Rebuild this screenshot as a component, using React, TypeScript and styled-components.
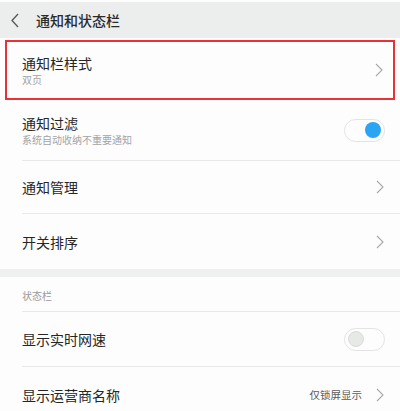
import React from 'react'
import styled, { createGlobalStyle } from 'styled-components'

const GlobalStyle = createGlobalStyle`
  html, body {
    margin: 0;
    padding: 0;
    background: #fdfdfd;
  }
  body {
    font-family: 'Noto Sans CJK SC', 'Noto Sans', sans-serif;
    color: #262626;
  }
`

const Page = styled.div`
  width: 400px;
  height: 411px;
  overflow: hidden;
  padding-top: 2px;
  box-sizing: border-box;
  background: #fdfdfd;
`

const Header = styled.div`
  height: 36px;
  display: flex;
  align-items: center;
  background: #eceeee;
  padding-left: 11px;
  gap: 17px;
`

const Title = styled.div`
  font-size: 14px;
  color: #2a2a2a;
  font-weight: 500;
`

const Highlight = styled.div`
  margin: 2px 5px 0 5px;
  height: 60px;
  box-sizing: border-box;
  border: 2px solid #e8323a;
  display: flex;
  align-items: center;
  padding: 0 10px 0 15px;
`

const Row = styled.div<{ $h: number; $divider?: boolean }>`
  height: ${(p) => p.$h}px;
  box-sizing: border-box;
  margin-left: 22px;
  padding-right: 16px;
  display: flex;
  align-items: center;
  border-bottom: ${(p) => (p.$divider ? '1px solid #e9e9e9' : 'none')};
`

const Texts = styled.div`
  flex: 1;
  display: flex;
  flex-direction: column;
  gap: 1px;
`

const Label = styled.div`
  font-size: 14px;
  line-height: 18px;
  color: #262626;
`

const Sub = styled.div`
  font-size: 10px;
  line-height: 14px;
  color: #a3a3a3;
`

const SectionLabel = styled.div`
  font-size: 10px;
  color: #9a9a9a;
  padding-top: 2px;
`

const Band = styled.div`
  height: 8px;
  background: #eef1f0;
`

const Value = styled.div`
  font-size: 10.5px;
  color: #5a5a5a;
  margin-right: 14px;
`

const Switch = styled.div<{ $on?: boolean }>`
  width: 41px;
  height: 23px;
  box-sizing: border-box;
  border: 1px solid #e3e3e3;
  border-radius: 12px;
  background: #fdfdfd;
  display: flex;
  align-items: center;
  justify-content: ${(p) => (p.$on ? 'flex-end' : 'flex-start')};
  padding: 0 3px;
  margin-right: -1px;
`

const Knob = styled.div<{ $on?: boolean }>`
  width: 16px;
  height: 16px;
  border-radius: 50%;
  box-sizing: border-box;
  background: ${(p) => (p.$on ? '#2aa5f3' : '#e7e9e7')};
  border: ${(p) => (p.$on ? 'none' : '1px solid #d9dbd9')};
`

const Chevron = () => (
  <svg width="8" height="14" viewBox="0 0 8 14">
    <path d="M1 1 L7 7 L1 13" fill="none" stroke="#a8a8a8" strokeWidth="1.1" />
  </svg>
)

const Back = () => (
  <svg width="8" height="15" viewBox="0 0 8 15">
    <path d="M7 1 L1 7.5 L7 14" fill="none" stroke="#555" strokeWidth="1.3" />
  </svg>
)

const App = (): JSX.Element => {
  return (
    <>
      <GlobalStyle />
      <Page>
        <Header>
          <Back />
          <Title>通知和状态栏</Title>
        </Header>
        <Highlight>
          <Texts>
            <Label>通知栏样式</Label>
            <Sub>双页</Sub>
          </Texts>
          <Chevron />
        </Highlight>
        <Row $h={61} $divider>
          <Texts>
            <Label>通知过滤</Label>
            <Sub>系统自动收纳不重要通知</Sub>
          </Texts>
          <Switch $on>
            <Knob $on />
          </Switch>
        </Row>
        <Row $h={53} $divider>
          <Texts>
            <Label>通知管理</Label>
          </Texts>
          <Chevron />
        </Row>
        <Row $h={55}>
          <Texts>
            <Label>开关排序</Label>
          </Texts>
          <Chevron />
        </Row>
        <Band />
        <Row $h={35} $divider>
          <SectionLabel>状态栏</SectionLabel>
        </Row>
        <Row $h={55} $divider>
          <Texts>
            <Label>显示实时网速</Label>
          </Texts>
          <Switch>
            <Knob />
          </Switch>
        </Row>
        <Row $h={55}>
          <Texts>
            <Label>显示运营商名称</Label>
          </Texts>
          <Value>仅锁屏显示</Value>
          <Chevron />
        </Row>
      </Page>
    </>
  )
}

export default App
